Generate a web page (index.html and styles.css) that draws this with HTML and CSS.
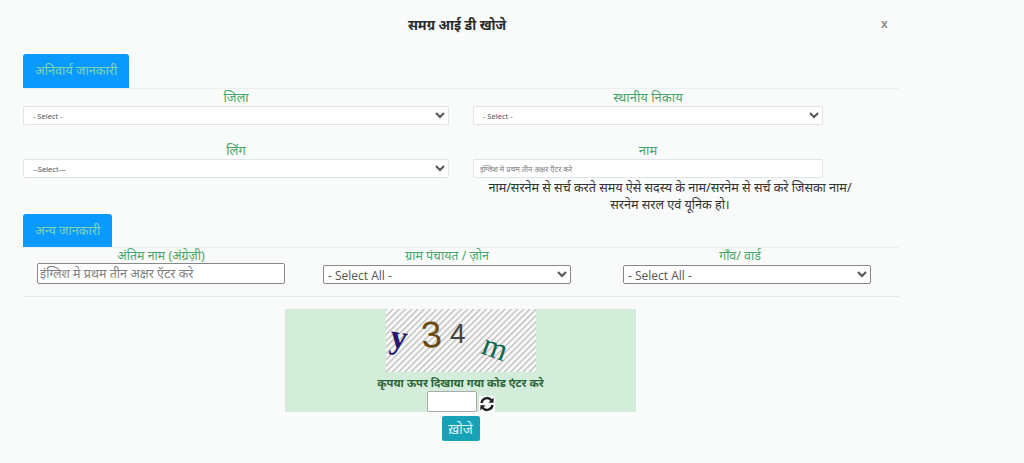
FILE: index.html
```html
<!doctype html>
<html lang="hi">

<head>
  <meta charset="utf-8">
  <title>समग्र आई डी खोजे</title>
  <link rel="stylesheet" href="styles.css">
</head>

<body>
  <div class="modalHead">
    <h1 class="modalTitle">समग्र आई डी खोजे</h1>
    <span class="closeBtn">x</span>
  </div>

  <div class="tabBar"><span class="tab">अनिवार्य जानकारी</span></div>

  <div class="twoCols">
    <div class="field">
      <label class="fieldLabel">जिला</label>
      <select class="smallSelect"><option>- Select -</option></select>
    </div>
    <div class="field fieldRight">
      <label class="fieldLabel">स्थानीय निकाय</label>
      <select class="smallSelect"><option>- Select -</option></select>
    </div>
    <div class="field">
      <label class="fieldLabel">लिंग</label>
      <select class="smallSelect"><option>--Select---</option></select>
    </div>
    <div class="field fieldRight">
      <label class="fieldLabel">नाम</label>
      <input class="smallInput" type="text" placeholder="इंग्लिश मे प्रथम तीन अक्षर ऍटर करे">
    </div>
  </div>
  <p class="note">नाम/सरनेम से सर्च करते समय ऐसे सदस्य के नाम/सरनेम से सर्च करे जिसका नाम/ सरनेम सरल एवं यूनिक हो।</p>

  <div class="tabBar"><span class="tab tabSecond">अन्य जानकारी</span></div>

  <div class="threeCols">
    <div class="field">
      <label class="fieldLabel smallLabel">अंतिम नाम (अंग्रेज़ी)</label>
      <input class="bigInput" type="text" placeholder="इंग्लिश मे प्रथम तीन अक्षर ऍटर करे">
    </div>
    <div class="field">
      <label class="fieldLabel smallLabel">ग्राम पंचायत / ज़ोन</label>
      <select class="bigSelect"><option>- Select All -</option></select>
    </div>
    <div class="field">
      <label class="fieldLabel smallLabel">गाँव/ वार्ड</label>
      <select class="bigSelect"><option>- Select All -</option></select>
    </div>
  </div>

  <div class="captchaWrap">
    <div class="captchaBox">
      <svg class="captchaImg" width="150" height="63" viewBox="0 0 150 63">
        <defs>
          <pattern id="hatch" width="4.4" height="4.4" patternUnits="userSpaceOnUse" patternTransform="rotate(45)">
            <rect width="4.4" height="4.4" fill="#f8f8f8"/>
            <rect width="1.2" height="4.4" fill="#b8b8b8"/>
          </pattern>
        </defs>
        <rect width="150" height="63" fill="url(#hatch)"/>
        <text x="0" y="0" transform="translate(3 38) rotate(8)" class="capY">y</text>
        <text x="0" y="0" transform="translate(36 39) rotate(-4)" class="cap3">3</text>
        <text x="0" y="0" transform="translate(64 34)" class="cap4">4</text>
        <text x="0" y="0" transform="translate(94 44) rotate(20)" class="capM">m</text>
      </svg>
      <div class="captchaText">कृपया ऊपर दिखाया गया कोड एंटर करे</div>
      <div class="captchaRow">
        <input class="captchaInput" type="text">
        <svg class="refresh" width="16" height="16" viewBox="0 0 16 16">
          <rect width="16" height="16" fill="#fff"/>
          <path d="M2.5 7 A5.6 5.6 0 0 1 12.4 4.2" fill="none" stroke="#222" stroke-width="2.4"/>
          <path d="M14.6 1.6 V6.8 H9.4 Z" fill="#222"/>
          <path d="M13.5 9 A5.6 5.6 0 0 1 3.6 11.8" fill="none" stroke="#222" stroke-width="2.4"/>
          <path d="M1.4 14.4 V9.2 H6.6 Z" fill="#222"/>
        </svg>
      </div>
    </div>
    <button class="searchBtn" type="button">ख़ोजे</button>
  </div>
</body>

</html>
```
FILE: styles.css
```css
body {
  margin: 0;
  height: 463px;
  overflow: hidden;
  padding: 0 125px 0 23px;
  background-color: #f9fafa;
  font-family: "Noto Sans", "Liberation Sans", sans-serif;
  color: #212529;
}

.modalHead {
  display: flex;
  justify-content: center;
  position: relative;
  height: 54px;
}

.modalTitle {
  margin: 15px 8px 0 0;
  font-size: 13.5px;
  line-height: 21px;
  font-weight: 700;
  color: #2b2b2b;
}

.closeBtn {
  position: absolute;
  left: 858px;
  top: 15px;
  font-size: 12px;
  font-weight: 600;
  color: #888;
}

.tabBar {
  display: flex;
  border-bottom: 1px solid #eceeef;
}

.tab {
  padding: 0 12px;
  height: 34px;
  line-height: 33px;
  font-size: 12.7px;
  white-space: nowrap;
  color: #7fd4b0;
  background-color: #0a99ff;
  border-radius: 3px 3px 0 0;
}

.tabSecond {
  height: 33px;
}

.twoCols {
  display: grid;
  grid-template-columns: 426px 350px;
  column-gap: 24px;
  row-gap: 17px;
}

.field {
  display: flex;
  flex-direction: column;
}

.fieldLabel {
  height: 17px;
  line-height: 17px;
  text-align: center;
  font-size: 13px;
  color: #48a668;
}

.smallSelect,
.smallInput {
  box-sizing: border-box;
  width: 100%;
  height: 19px;
  background-color: #fff;
  border: 1px solid #e2e5e8;
  border-radius: 2px;
  font-family: "Noto Sans", "Liberation Sans", sans-serif;
  font-size: 7.5px;
  color: #555;
  padding: 0 5px;
}

.smallInput {
  padding: 0 6px;
}

.smallInput::placeholder {
  color: #777;
}

.note {
  box-sizing: border-box;
  width: 380px;
  margin: 1px 0 0 457px;
  text-align: center;
  font-size: 12.6px;
  line-height: 17px;
  color: #333;
}

.note + .tabBar {
  margin-top: 1px;
}

.threeCols {
  display: grid;
  grid-template-columns: 248px 248px 248px;
  column-gap: 38px;
  padding: 0 0 8px 14px;
  border-bottom: 1px solid #e0ebe5;
  grid-template-rows: 36px;
  height: 40px;
}

.threeCols .field:last-child {
  margin-left: 14px;
}

.smallLabel {
  font-size: 12.4px;
  line-height: 15px;
}

.bigInput,
.bigSelect {
  box-sizing: border-box;
  width: 248px;
  background-color: #fff;
  border: 1px solid #888;
  border-radius: 2px;
  font-family: "Open Sans", "Noto Sans", sans-serif;
  color: #555;
}

.bigInput {
  height: 23px;
  font-size: 12.5px;
  padding: 0 2px;
}

.bigInput::placeholder {
  color: #808080;
}

.bigSelect {
  height: 19px;
  font-size: 12px;
}

.captchaWrap {
  display: flex;
  flex-direction: column;
  align-items: center;
  width: 351px;
  margin: 12px 0 0 262px;
}

.captchaBox {
  display: flex;
  flex-direction: column;
  align-items: center;
  width: 351px;
  height: 103px;
  background-color: #d4edda;
}

.captchaImg {
  display: block;
}

.capY {
  font-family: "Liberation Serif", serif;
  font-size: 34px;
  font-weight: 700;
  fill: #241a6b;
}

.cap3 {
  font-family: "Liberation Sans", sans-serif;
  font-size: 37px;
  fill: #6a4a10;
}

.cap4 {
  font-family: "Liberation Sans", sans-serif;
  font-size: 28px;
  fill: #444;
}

.capM {
  font-family: "Liberation Serif", serif;
  font-size: 32px;
  fill: #0e6b50;
}

.captchaText {
  margin-top: 3px;
  height: 16px;
  line-height: 16px;
  font-size: 11.2px;
  font-weight: 700;
  color: #2a6438;
}

.captchaRow {
  display: flex;
  align-items: flex-end;
  gap: 2px;
}

.captchaInput {
  box-sizing: border-box;
  width: 50px;
  height: 21px;
  background-color: #fff;
  border: 1px solid #aaa;
  border-radius: 2px;
  padding: 0;
}

.searchBtn {
  margin-top: 4px;
  width: 38px;
  height: 25px;
  padding: 0;
  background-color: #17a2b8;
  border: 0;
  border-radius: 2px;
  font-family: "Noto Sans", "Liberation Sans", sans-serif;
  font-size: 13.5px;
  color: #dff2f4;
}
```
